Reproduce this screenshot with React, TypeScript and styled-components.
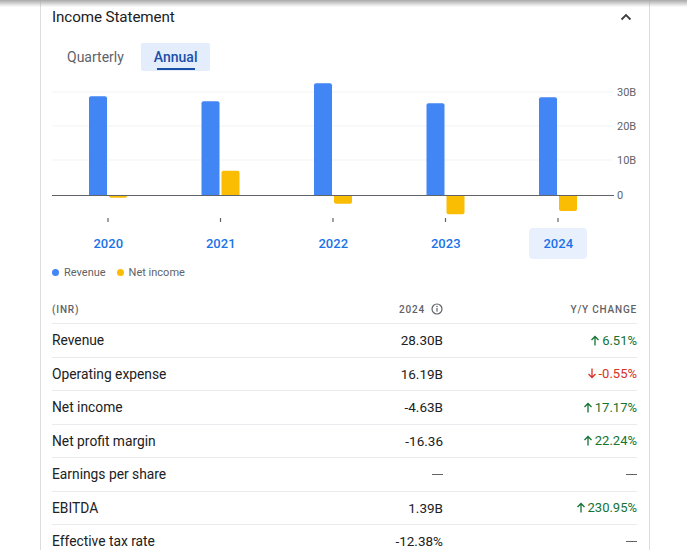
import styled, { createGlobalStyle } from "styled-components";

const GlobalStyle = createGlobalStyle`
  body {
    margin: 0;
    background: #ffffff;
    font-family: Roboto, "Liberation Sans", Arial, sans-serif;
    color: #202124;
  }
`;

const TopShadow = styled.div`
  position: fixed;
  top: 0;
  left: 0;
  right: 0;
  height: 7px;
  background: linear-gradient(#a9a9a9, rgba(255, 255, 255, 0));
  z-index: 2;
`;

const Card = styled.div`
  margin-left: 40px;
  width: 608px;
  min-height: 550px;
  border-left: 1px solid #dadce0;
  border-right: 1px solid #dadce0;
  box-sizing: content-box;
`;

const Header = styled.div`
  display: flex;
  align-items: center;
  justify-content: space-between;
  height: 34px;
  padding: 0 17px 0 11px;
`;

const Title = styled.div`
  font-size: 15.2px;
  font-weight: 400;
  color: #202124;
  letter-spacing: -0.1px;
`;

const Tabs = styled.div`
  display: flex;
  gap: 4px;
  margin: 9px 0 0 13px;
`;

const Tab = styled.div<{ $active?: boolean }>`
  position: relative;
  display: flex;
  align-items: center;
  height: 28px;
  padding: 0 13px;
  font-size: 14px;
  font-weight: ${(p) => (p.$active ? 500 : 400)};
  color: ${(p) => (p.$active ? "#1a4fa8" : "#5f6368")};
  background: ${(p) => (p.$active ? "#e3edfc" : "transparent")};
  border-radius: 2px;

  &::after {
    content: "";
    display: ${(p) => (p.$active ? "block" : "none")};
    position: absolute;
    left: 16px;
    right: 15px;
    bottom: 1px;
    height: 2px;
    background: #1a4fa8;
  }
`;

const ChartSvg = styled.svg`
  display: block;
  margin-top: 9px;
`;

const Years = styled.div`
  display: grid;
  grid-template-columns: repeat(5, 112.5px);
  margin-left: 11px;
`;

const Year = styled.div<{ $active?: boolean }>`
  justify-self: center;
  display: flex;
  align-items: center;
  justify-content: center;
  width: 58px;
  height: 31px;
  border-radius: 4px;
  font-size: 13px;
  font-weight: 500;
  color: #1a73e8;
  background: ${(p) => (p.$active ? "#e8f0fe" : "transparent")};
`;

const Legend = styled.div`
  display: flex;
  align-items: center;
  gap: 11px;
  margin: 4px 0 0 11px;
  height: 18px;
`;

const LegendItem = styled.div`
  display: flex;
  align-items: center;
  gap: 5px;
  font-size: 11px;
  color: #5f6368;
`;

const Dot = styled.span<{ $color: string }>`
  width: 7px;
  height: 7px;
  border-radius: 50%;
  background: ${(p) => p.$color};
`;

const Table = styled.div`
  margin: 14px 0 0 11px;
  width: 585px;
`;

const Row = styled.div<{ $head?: boolean }>`
  display: grid;
  grid-template-columns: 1fr 150px 194px;
  align-items: center;
  height: ${(p) => (p.$head ? "28px" : "32.5px")};
  border-top: ${(p) => (p.$head ? "none" : "1px solid #e8eaed")};
`;

const HeadCell = styled.div<{ $right?: boolean }>`
  display: flex;
  align-items: center;
  justify-content: ${(p) => (p.$right ? "flex-end" : "flex-start")};
  gap: 6px;
  font-size: 10px;
  font-weight: 500;
  letter-spacing: 0.8px;
  color: #5f6368;
`;

const Label = styled.div`
  font-size: 13.8px;
  color: #202124;
`;

const Value = styled.div`
  display: flex;
  align-items: center;
  justify-content: flex-end;
  font-size: 13.5px;
  color: #202124;
`;

const Change = styled.div<{ $tone?: "up" | "down" | "none" }>`
  display: flex;
  align-items: center;
  justify-content: flex-end;
  gap: 2px;
  font-size: 13px;
  color: ${(p) =>
    p.$tone === "up" ? "#137333" : p.$tone === "down" ? "#d93025" : "#5f6368"};
`;

const Dash = styled.span`
  display: inline-block;
  width: 11px;
  height: 1.5px;
  background: #5f6368;
`;

const data = [
  { year: "2020", rev: 28.6, ni: -0.8 },
  { year: "2021", rev: 27.2, ni: 7.0 },
  { year: "2022", rev: 32.4, ni: -2.5 },
  { year: "2023", rev: 26.57, ni: -5.59 },
  { year: "2024", rev: 28.3, ni: -4.63 },
];

const rows: { label: string; value: string; change: string; tone: "up" | "down" | "none" }[] = [
  { label: "Revenue", value: "28.30B", change: "6.51%", tone: "up" },
  { label: "Operating expense", value: "16.19B", change: "-0.55%", tone: "down" },
  { label: "Net income", value: "-4.63B", change: "17.17%", tone: "up" },
  { label: "Net profit margin", value: "-16.36", change: "22.24%", tone: "up" },
  { label: "Earnings per share", value: "", change: "", tone: "none" },
  { label: "EBITDA", value: "1.39B", change: "230.95%", tone: "up" },
  { label: "Effective tax rate", value: "-12.38%", change: "", tone: "none" },
];

const Arrow = ({ up }: { up: boolean }) => (
  <svg width="10" height="11" viewBox="0 0 10 11" fill="none">
    {up ? (
      <path d="M5 10.5V1.5M1.5 5L5 1.5L8.5 5" stroke="currentColor" strokeWidth="1.3" />
    ) : (
      <path d="M5 0.5V9.5M1.5 6L5 9.5L8.5 6" stroke="currentColor" strokeWidth="1.3" />
    )}
  </svg>
);

// bar with rounded outer end only
const barPath = (x: number, y0: number, h: number, w: number) => {
  const r = Math.min(2, Math.abs(h));
  if (h >= 0) {
    const top = y0 - h;
    return `M${x} ${y0}V${top + r}Q${x} ${top} ${x + r} ${top}H${x + w - r}Q${x + w} ${top} ${x + w} ${top + r}V${y0}Z`;
  }
  const bot = y0 - h;
  return `M${x} ${y0}V${bot - r}Q${x} ${bot} ${x + r} ${bot}H${x + w - r}Q${x + w} ${bot} ${x + w} ${bot - r}V${y0}Z`;
};

const Chart = () => {
  const zero = 115;
  const scale = 3.45;
  const centers = [67, 179.5, 292, 404.5, 517];
  return (
    <ChartSvg width="608" height="148" viewBox="0 0 608 148">
      {[12, 46, 80].map((y) => (
        <line key={y} x1="11" x2="572" y1={y} y2={y} stroke="#f1f3f4" strokeWidth="1" />
      ))}
      {[
        ["30B", 12],
        ["20B", 46],
        ["10B", 80],
        ["0", 115],
      ].map(([t, y]) => (
        <text
          key={t}
          x="576"
          y={Number(y) + 4}
          fontSize="11"
          fill="#5f6368"
          fontFamily="Roboto, sans-serif"
        >
          {t}
        </text>
      ))}
      {data.map((d, i) => {
        const c = centers[i];
        return (
          <g key={d.year}>
            <path d={barPath(c - 19, zero, d.rev * scale, 18)} fill="#4285f4" />
            <path d={barPath(c + 1, zero, d.ni * scale, 18)} fill="#fbbc04" />
            <line x1={c} x2={c} y1="138" y2="142" stroke="#5f6368" strokeWidth="1.2" />
          </g>
        );
      })}
      <line x1="11" x2="573" y1={zero + 0.5} y2={zero + 0.5} stroke="#5f6368" strokeWidth="1.2" />
    </ChartSvg>
  );
};

export default function App() {
  return (
    <>
      <GlobalStyle />
      <TopShadow />
      <Card>
        <Header>
          <Title>Income Statement</Title>
          <svg width="12" height="8" viewBox="0 0 12 8">
            <path d="M1.5 6.5L6 2L10.5 6.5" stroke="#3c4043" strokeWidth="1.8" fill="none" />
          </svg>
        </Header>
        <Tabs>
          <Tab>Quarterly</Tab>
          <Tab $active>Annual</Tab>
        </Tabs>
        <Chart />
        <Years>
          {data.map((d, i) => (
            <Year key={d.year} $active={i === 4}>
              {d.year}
            </Year>
          ))}
        </Years>
        <Legend>
          <LegendItem>
            <Dot $color="#4285f4" />
            Revenue
          </LegendItem>
          <LegendItem>
            <Dot $color="#fbbc04" />
            Net income
          </LegendItem>
        </Legend>
        <Table>
          <Row $head>
            <HeadCell>(INR)</HeadCell>
            <HeadCell $right>
              2024
              <svg width="12" height="12" viewBox="0 0 12 12">
                <circle cx="6" cy="6" r="5" stroke="#5f6368" strokeWidth="1.2" fill="none" />
                <rect x="5.4" y="5" width="1.2" height="3.6" fill="#5f6368" />
                <circle cx="6" cy="3.5" r="0.75" fill="#5f6368" />
              </svg>
            </HeadCell>
            <HeadCell $right>Y/Y CHANGE</HeadCell>
          </Row>
          {rows.map((r) => (
            <Row key={r.label}>
              <Label>{r.label}</Label>
              <Value>{r.value || <Dash />}</Value>
              <Change $tone={r.tone}>
                {r.change ? (
                  <>
                    <Arrow up={r.tone === "up"} />
                    {r.change}
                  </>
                ) : (
                  <Dash />
                )}
              </Change>
            </Row>
          ))}
        </Table>
      </Card>
    </>
  );
}
